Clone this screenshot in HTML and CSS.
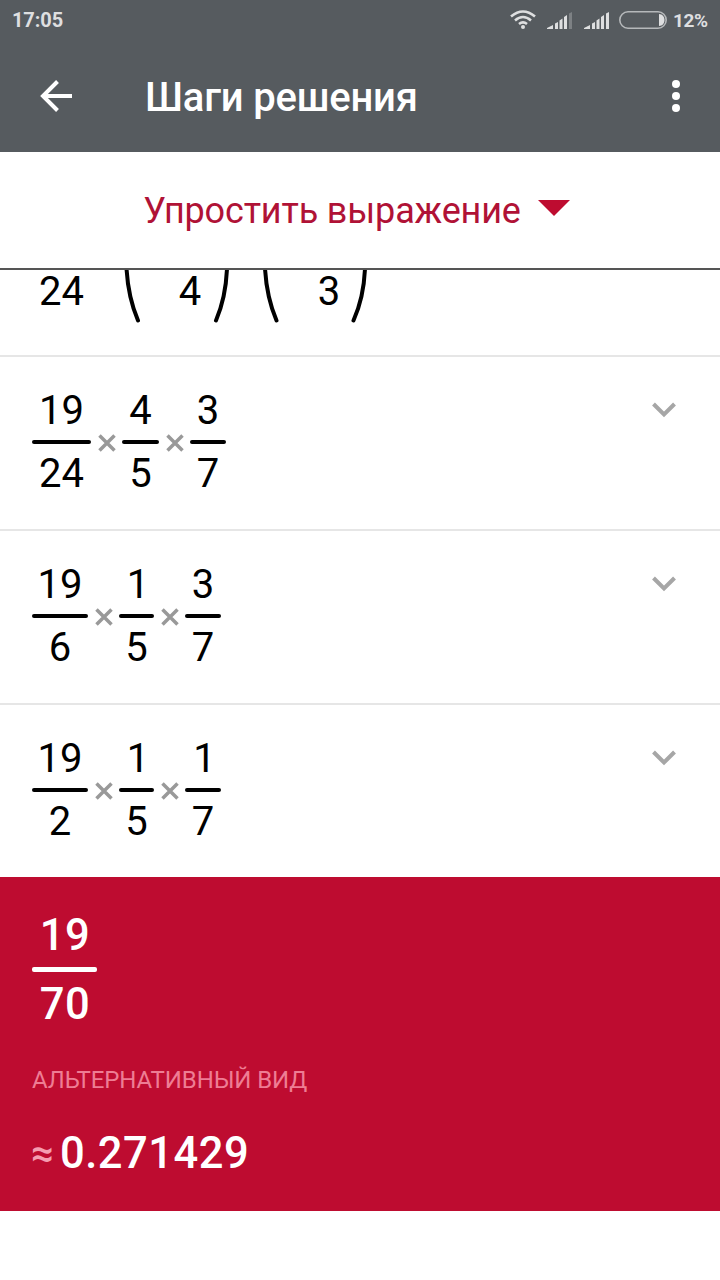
FILE: index.html
```html
<!DOCTYPE html>
<html lang="ru">

<head>
    <meta charset="UTF-8">
    <meta name="viewport" content="width=device-width, initial-scale=1.0">
    <title>Шаги решения</title>
    <link rel="stylesheet" href="styles.css">
</head>

<body>
    <header>
        <div class="status-bar">
            <span class="clock">17:05</span>
            <svg class="wifi" width="26" height="20" viewBox="0 0 26 20">
                <path d="M1 6.600Q13 -3.600 25 6.600M5 10.400Q13 3.600 21 10.400M9 14Q13 10.800 17 14" fill="none" stroke="#dedfe0" stroke-width="2.600"/>
                <circle cx="13" cy="17" r="2" fill="#dedfe0"/>
            </svg>
            <svg class="signal" width="26" height="17" viewBox="0 0 26 17">
                <path d="M0 17v-1l6-3v4zM8 11.500l3-1.500v7h-3zM12.500 8.500l3-2v10.500h-3zM17 5l3-2v14h-3z" fill="#dedfe0"/>
                <path d="M22 1.500l3-1.500v17h-3z" fill="#7d8184"/>
            </svg>
            <svg class="signal" width="26" height="17" viewBox="0 0 26 17">
                <path d="M0 17v-1l6-3v4zM8 11.500l3-1.500v7h-3zM12.500 8.500l3-2v10.500h-3zM17 5l3-2v14h-3zM22 1.500l3-1.500v17h-3z" fill="#dedfe0"/>
            </svg>
            <svg class="battery" width="48" height="18" viewBox="0 0 48 18">
                <rect x="0.800" y="0.800" width="46.400" height="16.400" rx="8.200" fill="none" stroke="#b5b8ba" stroke-width="1.600"/>
                <path d="M40 3c3.500 0 5.500 3 5.500 6s-2 6-5.500 6z" fill="#dedfe0"/>
            </svg>
            <span class="percent">12%</span>
        </div>
        <div class="toolbar">
            <svg class="back" width="32" height="32" viewBox="0 0 32 32">
                <path d="M17.500 1.500L3 16l14.500 14.500M3 16h29" fill="none" stroke="#fff" stroke-width="4"/>
            </svg>
            <h1>Шаги решения</h1>
            <svg class="more" width="8" height="32" viewBox="0 0 8 32">
                <g fill="#fff"><circle cx="4" cy="4" r="4"/><circle cx="4" cy="16" r="4"/><circle cx="4" cy="28" r="4"/></g>
            </svg>
        </div>
    </header>

    <div class="method">
        <span>Упростить выражение</span>
        <svg width="32" height="16" viewBox="0 0 32 16"><path d="M0 0h32L16 16z" fill="#be0c30"/></svg>
    </div>

    <main>
        <section class="step step-cut">
            <span class="cut-num wide">24</span>
            <svg class="paren" width="18" height="54" viewBox="0 0 18 54"><path d="M3.500 -2Q5 27 15 50.500"/></svg>
            <span class="cut-num">4</span>
            <svg class="paren" width="18" height="54" viewBox="0 0 18 54"><path d="M15 -2Q14 27 4 50.500"/></svg>
            <svg class="paren second" width="18" height="54" viewBox="0 0 18 54"><path d="M3 -2Q4.500 27 14.500 50.500"/></svg>
            <span class="cut-num">3</span>
            <svg class="paren" width="18" height="54" viewBox="0 0 18 54"><path d="M14 -2Q13 27 2.500 50.500"/></svg>
        </section>

        <section class="step">
            <div class="frac f59"><span>19</span><i></i><span>24</span></div>
            <svg class="times" width="18" height="18" viewBox="0 0 18 18"><path d="M1.500 1.500l15 15M16.500 1.500l-15 15"/></svg>
            <div class="frac f37"><span>4</span><i></i><span>5</span></div>
            <svg class="times" width="18" height="18" viewBox="0 0 18 18"><path d="M1.500 1.500l15 15M16.500 1.500l-15 15"/></svg>
            <div class="frac f36"><span>3</span><i></i><span>7</span></div>
            <svg class="chevron" width="24" height="16" viewBox="0 0 24 16"><path d="M1.500 2L12 12.500L22.500 2"/></svg>
        </section>

        <section class="step">
            <div class="frac f56"><span>19</span><i></i><span>6</span></div>
            <svg class="times" width="18" height="18" viewBox="0 0 18 18"><path d="M1.500 1.500l15 15M16.500 1.500l-15 15"/></svg>
            <div class="frac f35"><span class="one">1</span><i></i><span>5</span></div>
            <svg class="times" width="18" height="18" viewBox="0 0 18 18"><path d="M1.500 1.500l15 15M16.500 1.500l-15 15"/></svg>
            <div class="frac f36"><span>3</span><i></i><span>7</span></div>
            <svg class="chevron" width="24" height="16" viewBox="0 0 24 16"><path d="M1.500 2L12 12.500L22.500 2"/></svg>
        </section>

        <section class="step last">
            <div class="frac f56"><span>19</span><i></i><span>2</span></div>
            <svg class="times" width="18" height="18" viewBox="0 0 18 18"><path d="M1.500 1.500l15 15M16.500 1.500l-15 15"/></svg>
            <div class="frac f35"><span class="one">1</span><i></i><span>5</span></div>
            <svg class="times" width="18" height="18" viewBox="0 0 18 18"><path d="M1.500 1.500l15 15M16.500 1.500l-15 15"/></svg>
            <div class="frac f36"><span class="one">1</span><i></i><span>7</span></div>
            <svg class="chevron" width="24" height="16" viewBox="0 0 24 16"><path d="M1.500 2L12 12.500L22.500 2"/></svg>
        </section>

        <section class="result">
            <div class="frac"><span>19</span><i></i><span>70</span></div>
            <h2>АЛЬТЕРНАТИВНЫЙ ВИД</h2>
            <p><span class="approx">≈</span>0.271429</p>
        </section>
    </main>
</body>

</html>
```

FILE: styles.css
```css
* {
    box-sizing: border-box;
}

body {
    margin: 0;
    font-family: Roboto, "Liberation Sans", sans-serif;
    background-color: #fff;
    color: #000;
}

h1,
h2,
p {
    margin: 0;
}

svg {
    display: block;
    flex: none;
}

header {
    height: 152px;
    background-color: #565b5f;
}

.status-bar {
    display: flex;
    align-items: center;
    height: 40px;
    padding: 0 12px;
    font-size: 20px;
    font-weight: 700;
    color: #dedfe0;
}

.clock {
    margin-right: auto;
    letter-spacing: -0.1px;
}

.percent {
    width: 35px;
    font-size: 19px;
    letter-spacing: -0.4px;
}

.signal {
    margin-left: 11px;
}

.battery {
    margin: 0 6px 0 9px;
}

.toolbar {
    display: flex;
    align-items: center;
    height: 112px;
    padding: 0 40px;
}

.toolbar h1 {
    flex: 1;
    margin-left: 73px;
    padding-top: 2px;
    font-size: 40px;
    font-weight: 500;
    letter-spacing: -0.2px;
    color: #fff;
}

.method {
    display: flex;
    align-items: center;
    justify-content: center;
    gap: 17px;
    height: 118px;
    padding-right: 7px;
    border-bottom: 2px solid #555;
    font-size: 36px;
    letter-spacing: -0.15px;
    color: #b01236;
}

.method span {
    padding-top: 2px;
}

.method svg {
    margin-bottom: 4px;
}

.step {
    display: flex;
    align-items: flex-start;
    height: 174px;
    padding: 30px 44px 0 32px;
    border-bottom: 2px solid #e6e6e6;
}

.step-cut {
    height: 87px;
    padding-top: 0;
}

.last {
    height: 172px;
    border-bottom: none;
}

.cut-num {
    width: 71px;
    margin-top: -2px;
    padding-left: 27px;
    font-size: 40px;
    line-height: 48px;
    text-align: center;
}

.cut-num.wide {
    width: 91px;
    text-align: left;
    padding-left: 7px;
}

.paren path {
    fill: none;
    stroke: #000;
    stroke-width: 4;
    stroke-linecap: round;
}

.second {
    margin-left: 32px;
}

.frac {
    text-align: center;
    font-size: 40px;
    line-height: 48px;
}

.frac span {
    display: block;
}

.frac .one {
    padding-left: 3px;
}

.frac i {
    display: block;
    height: 4px;
    margin: 5px 0 6px;
    border-radius: 2px;
    background-color: #000;
}

.f59 {
    width: 59px;
}

.f56 {
    width: 56px;
}

.f37 {
    width: 37px;
}

.f36 {
    width: 36px;
}

.f35 {
    width: 35px;
}

.times {
    margin: 47px 6px 0 7px;
}

.times path {
    fill: none;
    stroke: #999;
    stroke-width: 3.5;
}

.chevron {
    margin: 15px 0 0 auto;
}

.chevron path {
    fill: none;
    stroke: #a6a6a6;
    stroke-width: 4;
}

.result {
    height: 334px;
    padding: 32px 32px 0;
    background-color: #be0c30;
    color: #fff;
}

.result .frac {
    width: 65px;
    font-size: 43.5px;
    font-weight: 500;
    line-height: 54px;
    letter-spacing: 0.5px;
}

.result .frac span {
    padding-left: 1px;
}

.result .frac i {
    height: 5px;
    margin: 4px 0 6px;
    background-color: #fff;
}

.result h2 {
    margin-top: 33px;
    font-size: 24px;
    font-weight: 400;
    line-height: 30px;
    letter-spacing: -0.1px;
    color: #ee7d94;
}

.result p {
    display: flex;
    margin-top: 32px;
    font-size: 43.5px;
    font-weight: 500;
    line-height: 54px;
    letter-spacing: 0.5px;
}

.approx {
    width: 28px;
    margin-left: -1px;
    margin-right: 1px;
    font-size: 40px;
    color: #f59db0;
}
```
